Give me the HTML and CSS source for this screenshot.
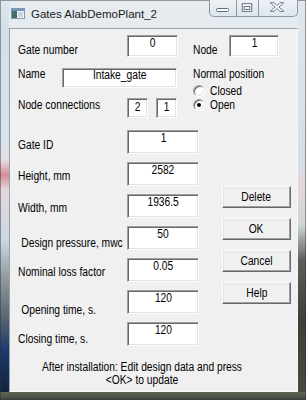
FILE: index.html
```html
<!DOCTYPE html>
<html>
<head>
<meta charset="utf-8">
<link rel="stylesheet" href="styles.css">
</head>
<body>
<div class="window">
  <div class="titlebar">
    <svg class="app-icon" width="14" height="11" viewBox="0 0 14 11">
      <rect x="0.5" y="0.5" width="13" height="10" fill="#eef2f6" stroke="#8a96a4"/>
      <rect x="1" y="1" width="12" height="2" fill="#6c93c4"/>
      <rect x="1" y="3" width="5" height="7" fill="#3f6d67"/>
      <rect x="7" y="4" width="5" height="5" fill="#c9d4de"/>
    </svg>
    <span class="title">Gates AlabDemoPlant_2</span>
    <div class="caption">
      <div class="cbtn cmin">
        <svg width="26" height="16" viewBox="0 0 26 16"><rect x="6.5" y="8.5" width="12" height="3" rx="1" fill="#fff" stroke="#5b6a7e"/></svg>
      </div>
      <div class="cbtn cmax">
        <svg width="22" height="16" viewBox="0 0 22 16"><rect x="5.5" y="3.5" width="10" height="8" fill="#fff" stroke="#5b6a7e"/><rect x="7.5" y="6.5" width="6" height="3" fill="#fff" stroke="#5b6a7e"/></svg>
      </div>
      <div class="cbtn cclose">
        <svg width="39" height="16" viewBox="0 0 39 16"><polygon points="11.5,2.5 15.5,2.5 18.5,5.5 21.5,2.5 25.5,2.5 20.5,7 25.5,11.5 21.5,11.5 18.5,8.5 15.5,11.5 11.5,11.5 16.5,7" fill="#f4f6f8" stroke="#6f7c8c"/></svg>
      </div>
    </div>
  </div>
  <div class="client">
    <div class="top">
      <div class="top-left">
        <div class="row r-gate">
          <span class="lbl w109 off8">Gate number</span>
          <div class="field fs"><span class="v">0</span></div>
        </div>
        <div class="row r-name">
          <span class="lbl w44 offn">Name</span>
          <div class="field fname"><span class="v">Intake_gate</span></div>
        </div>
        <div class="row r-conn">
          <span class="lbl w109">Node connections</span>
          <div class="field fconn"><span class="v">2</span></div>
          <div class="field fconn"><span class="v">1</span></div>
        </div>
      </div>
      <div class="top-right">
        <div class="row r-gate">
          <span class="lbl w36 off8">Node</span>
          <div class="field fnode"><span class="v">1</span></div>
        </div>
        <div class="np">Normal position</div>
        <div class="radio r-closed"><span class="rb"></span><span class="rt">Closed</span></div>
        <div class="radio"><span class="rb on"></span><span class="rt">Open</span></div>
      </div>
    </div>
    <div class="mid">
      <div class="fields">
        <div class="frow"><span class="lbl w109 off8">Gate ID</span><div class="field fw"><span class="v">1</span></div></div>
        <div class="frow"><span class="lbl w109 off7">Height, mm</span><div class="field fw"><span class="v">2582</span></div></div>
        <div class="frow"><span class="lbl w109 off7">Width, mm</span><div class="field fw"><span class="v">1936.5</span></div></div>
        <div class="frow"><span class="lbl w109 off10 ind">Design pressure, mwc</span><div class="field fw"><span class="v">50</span></div></div>
        <div class="frow"><span class="lbl w109 off7">Nominal loss factor</span><div class="field fw"><span class="v">0.05</span></div></div>
        <div class="frow"><span class="lbl w109 off13 ind">Opening time, s.</span><div class="field fw"><span class="v">120</span></div></div>
        <div class="frow"><span class="lbl w109 off10">Closing time, s.</span><div class="field fw"><span class="v">120</span></div></div>
      </div>
      <div class="buttons">
        <div class="btn"><span class="v">Delete</span></div>
        <div class="btn"><span class="v">OK</span></div>
        <div class="btn"><span class="v">Cancel</span></div>
        <div class="btn"><span class="v">Help</span></div>
      </div>
    </div>
    <div class="note">
      <div class="nl">After installation: Edit design data and press</div>
      <div class="nl">&lt;OK&gt; to update</div>
    </div>
  </div>
</div>
</body>
</html>
```
FILE: styles.css
```css
* { box-sizing: border-box; }
html, body { margin: 0; padding: 0; }
body {
  width: 306px;
  height: 400px;
  overflow: hidden;
  font-family: "Liberation Sans", Arial, sans-serif;
  font-size: 12.5px;
  line-height: 14px;
  color: #000;
}
.window {
  width: 306px;
  height: 400px;
  padding: 0 8px 8px 9px;
  display: flex;
  flex-direction: column;
  background:
    linear-gradient(#5f6656, #41473b) 0 100% / 100% 8px no-repeat,
    linear-gradient(to bottom, #dfe6ec 0, #d3dfeb 30px, #d8e3ee 140px, #e8dde2 160px, #d48c99 175px, #e4d7dc 190px, #cbd7e2 240px, #8e979c 280px, #55636f 320px, #1d3a6c 350px, #122440 390px) 0 0 / 9px 100% no-repeat,
    linear-gradient(to bottom, #dfe6ec 0, #d6dde3 170px, #e6d6da 185px, #cfd4d8 225px, #5b6159 260px, #3b4138 320px, #474c40 400px) 100% 0 / 8px 100% no-repeat,
    linear-gradient(to bottom, #e6ebf0, #dce3ea);
  box-shadow: inset 0 0 0 1px rgba(40, 50, 60, 0.45);
}
.titlebar {
  height: 28px;
  display: flex;
  align-items: flex-start;
  flex: none;
}
.app-icon { margin: 8px 0 0 2px; flex: none; }
.title {
  margin: 7px 0 0 6px;
  font-size: 11.5px;
  line-height: 14px;
  color: #1b1b1b;
}
.caption {
  margin-left: auto;
  display: flex;
  height: 17px;
  border: 1px solid #8b98a8;
  border-top: none;
  border-radius: 0 0 5px 5px;
  overflow: hidden;
  background: linear-gradient(#eef2f6, #dfe5ec);
}
.cbtn { height: 16px; display: flex; }
.cmin { width: 26px; }
.cmax { width: 22px; border-left: 1px solid #8b98a8; }
.cclose { width: 39px; border-left: 1px solid #8b98a8; }
.client {
  width: 289px;
  height: 364px;
  background: #f0f0f0;
  border: 1px solid;
  border-color: #97a2ae #f6f8fa #f6f8fa #97a2ae;
  padding: 6px 0 0 8px;
  display: flex;
  flex-direction: column;
}
.top { display: flex; }
.top-left { width: 160px; display: flex; flex-direction: column; }
.top-right { margin-left: 15px; display: flex; flex-direction: column; }
.row { display: flex; align-items: flex-start; }
.r-name { margin-top: 11px; }
.r-conn { margin-top: 10px; }
.lbl {
  flex: none;
  white-space: nowrap;
  transform: scaleX(0.82);
  transform-origin: 0 50%;
}
.w109 { width: 109px; }
.w44 { width: 44px; }
.w36 { width: 36px; }
.off7 { margin-top: 7px; }
.off8 { margin-top: 8px; }
.off10 { margin-top: 10px; }
.off13 { margin-top: 13px; }
.offn { margin-top: -1px; }
.ind { padding-left: 4px; }
.v {
  display: inline-block;
  white-space: nowrap;
  transform: scaleX(0.82);
}
.field {
  flex: none;
  background: #fff;
  border: 1px solid;
  border-color: #a0a0a0 #fff #fff #a0a0a0;
  box-shadow: inset 1px 1px 0 #696969, inset -1px -1px 0 #e3e3e3;
  text-align: center;
  line-height: 13px;
  padding-top: 1px;
  white-space: nowrap;
}
.fs { width: 51px; height: 22px; }
.fnode { width: 50px; height: 22px; }
.fname { width: 115px; height: 20px; padding-top: 0; }
.fconn { width: 21px; height: 20px; padding-top: 2px; }
.fconn + .fconn { margin-left: 8px; }
.np {
  margin-top: 10px;
  white-space: nowrap;
  transform: scaleX(0.82);
  transform-origin: 0 50%;
}
.radio { display: flex; align-items: center; height: 14px; }
.r-closed { margin-top: 3px; }
.rt {
  white-space: nowrap;
  transform: scaleX(0.82);
  transform-origin: 0 50%;
}
.rb {
  width: 12px;
  height: 12px;
  border-radius: 50%;
  background: #fff;
  border: 1px solid;
  border-color: #a0a0a0 #fff #fff #a0a0a0;
  box-shadow: inset 1px 1px 0 #696969, inset -1px -1px 0 #e3e3e3;
  margin-right: 5px;
  display: flex;
  align-items: center;
  justify-content: center;
  flex: none;
}
.rb.on::after {
  content: "";
  width: 4px;
  height: 4px;
  border-radius: 50%;
  background: #000;
}
.mid { display: flex; margin-top: 12px; }
.fields { display: flex; flex-direction: column; gap: 8px; }
.frow { display: flex; align-items: flex-start; height: 24px; }
.fw { width: 72px; height: 24px; }
.buttons {
  margin: 56px 0 0 23px;
  display: flex;
  flex-direction: column;
  gap: 10px;
}
.btn {
  width: 69px;
  height: 22px;
  background: #f0f0f0;
  border: 1px solid;
  border-color: #fff #696969 #696969 #fff;
  box-shadow: inset -1px -1px 0 #a0a0a0, inset 1px 1px 0 #e3e3e3;
  display: flex;
  align-items: center;
  justify-content: center;
  padding-bottom: 1px;
}
.note {
  margin: 15px 0 0 -6px;
  width: 260px;
  line-height: 13px;
}
.nl {
  text-align: center;
  white-space: nowrap;
  transform: scaleX(0.82);
}
```
